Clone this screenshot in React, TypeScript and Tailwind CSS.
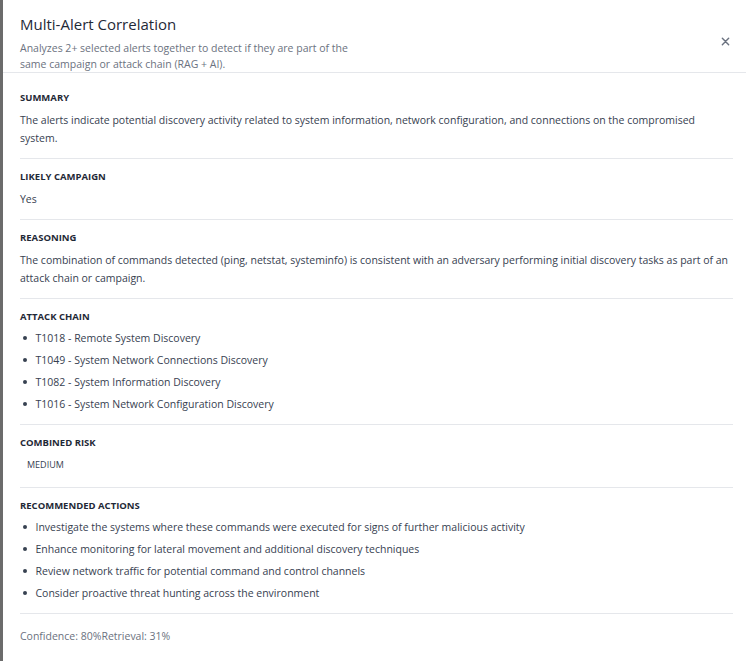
import React from "react";

interface Section {
  label: string;
  text?: string;
  items?: string[];
  badge?: string;
}

const sections: Section[] = [
  {
    label: "Summary",
    text: "The alerts indicate potential discovery activity related to system information, network configuration, and connections on the compromised system.",
  },
  { label: "Likely Campaign", text: "Yes" },
  {
    label: "Reasoning",
    text: "The combination of commands detected (ping, netstat, systeminfo) is consistent with an adversary performing initial discovery tasks as part of an attack chain or campaign.",
  },
  {
    label: "Attack Chain",
    items: [
      "T1018 - Remote System Discovery",
      "T1049 - System Network Connections Discovery",
      "T1082 - System Information Discovery",
      "T1016 - System Network Configuration Discovery",
    ],
  },
  { label: "Combined Risk", badge: "MEDIUM" },
  {
    label: "Recommended Actions",
    items: [
      "Investigate the systems where these commands were executed for signs of further malicious activity",
      "Enhance monitoring for lateral movement and additional discovery techniques",
      "Review network traffic for potential command and control channels",
      "Consider proactive threat hunting across the environment",
    ],
  },
];

export default function App() {
  return (
    <div
      className="h-[661px] w-[746px] bg-white border-l-[3px] border-[#6b6b6b] text-[#374151] overflow-hidden"
      style={{ fontFamily: '"Open Sans", "Noto Sans", sans-serif' }}
    >
      {/* Header */}
      <div className="flex items-start justify-between border-b border-[#e5e7eb] pl-[17px] pr-[16px] pt-[13px] pb-[0px]">
        <div>
          <h2 className="text-[15px] leading-[22px] font-medium text-[#1f2937]">Multi-Alert Correlation</h2>
          <p className="mt-[5px] w-[330px] text-[10.5px] leading-[16px] text-[#6b7280]">
            Analyzes 2+ selected alerts together to detect if they are part of the same campaign or attack chain (RAG + AI).
          </p>
        </div>
        <button className="mt-[24px] text-[#6b7280]" aria-label="Close">
          <svg width="9" height="9" viewBox="0 0 10 10" fill="none" stroke="currentColor" strokeWidth="1.6" strokeLinecap="round">
            <path d="M1.5 1.5l7 7M8.5 1.5l-7 7" />
          </svg>
        </button>
      </div>

      {/* Body */}
      <div className="pl-[17px] pr-[13px] pt-[7px]">
        {sections.map(s => (
          <div key={s.label} className="border-b border-[#e5e7eb] pt-[11px] pb-[11px]">
            <h3 className="text-[9.5px] leading-[14px] font-bold uppercase text-[#1f2937]">{s.label}</h3>
            {s.text && <p className="mt-[6px] text-[10.5px] leading-[18px]">{s.text}</p>}
            {s.items && (
              <ul className="mt-[5px] flex flex-col gap-[4px]">
                {s.items.map(item => (
                  <li key={item} className="flex items-center text-[10.5px] leading-[18px]">
                    <span className="ml-[3px] mr-[9px] h-[3.5px] w-[3.5px] rounded-full bg-[#374151]" />
                    {item}
                  </li>
                ))}
              </ul>
            )}
            {s.badge && (
              <span className="mt-[5px] inline-block rounded px-[7px] pt-[4px] pb-[5px] text-[9px] leading-[12px] font-medium text-[#374151]">
                {s.badge}
              </span>
            )}
          </div>
        ))}
        <div className="pt-[14px] text-[10.5px] leading-[16px] text-[#6b7280]">
          <span>Confidence: 80%</span>
          <span>Retrieval: 31%</span>
        </div>
      </div>
    </div>
  );
}
